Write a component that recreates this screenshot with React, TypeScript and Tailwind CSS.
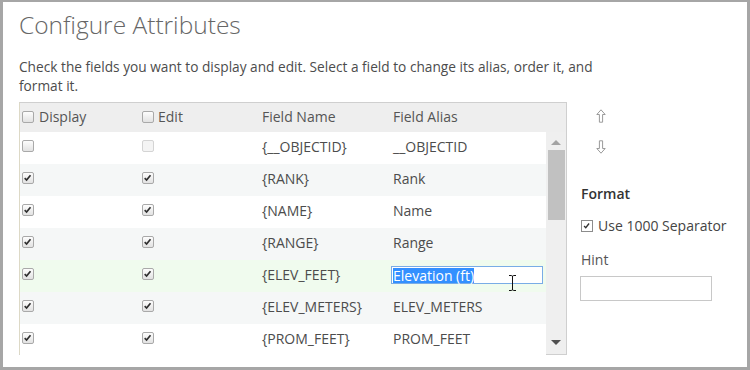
// Configure Attributes panel – field list with display/edit toggles
import React from 'react';

type Row = { name: string; alias: string; display: boolean; edit: boolean; disabled?: boolean };

const rows: Row[] = [
  { name: '{__OBJECTID}', alias: '__OBJECTID', display: false, edit: false, disabled: true },
  { name: '{RANK}', alias: 'Rank', display: true, edit: true },
  { name: '{NAME}', alias: 'Name', display: true, edit: true },
  { name: '{RANGE}', alias: 'Range', display: true, edit: true },
  { name: '{ELEV_FEET}', alias: 'Elevation (ft)', display: true, edit: true },
  { name: '{ELEV_METERS}', alias: 'ELEV_METERS', display: true, edit: true },
  { name: '{PROM_FEET}', alias: 'PROM_FEET', display: true, edit: true },
];

function Box({ checked, disabled }: { checked?: boolean; disabled?: boolean }) {
  return (
    <span
      className={
        'relative inline-block h-[12px] w-[12px] shrink-0 rounded-[2px] border ' +
        (disabled
          ? 'border-[#d4d4d4] bg-[#f4f4f4]'
          : 'border-[#a9a9a9] bg-gradient-to-b from-[#fdfdfd] to-[#e2e2e2]')
      }
    >
      {checked && (
        <svg viewBox="0 0 12 12" className="absolute left-[0px] top-[0px] h-[10px] w-[10px]">
          <path d="M2 6.2 L4.3 8.4 L9 2.6" fill="none" stroke="#2f2f2f" strokeWidth="2" />
        </svg>
      )}
    </span>
  );
}

function Arrow({ down }: { down?: boolean }) {
  return (
    <svg viewBox="0 0 10 14" className={'h-[14px] w-[10px] ' + (down ? 'rotate-180' : '')}>
      <path d="M5 0.8 L9.2 5.5 L6.6 5.5 L6.6 13.2 L3.4 13.2 L3.4 5.5 L0.8 5.5 Z" fill="#fff" stroke="#9a9a9a" strokeWidth="1" />
    </svg>
  );
}

export default function App() {
  return (
    <div
      className="h-[370px] w-[750px] overflow-hidden border-x-[3px] border-b-[3px] border-t-[2px] border-[#a6a6a6] bg-white pl-[16px] text-[#4c4c4c]"
      style={{ fontFamily: '"Open Sans", Lato, sans-serif' }}
    >
      <h1 className="mt-[8px] text-[24.5px] font-light leading-[30px] text-[#666]">Configure Attributes</h1>
      <p className="mt-[17px] text-[13.7px] leading-[19px] text-[#4c4c4c]">
        Check the fields you want to display and edit. Select a field to change its alias, order it, and
        <br />
        format it.
      </p>

      <div className="mt-[7px] flex">
        <div className="flex h-[253px] w-[548px] flex-col border border-l-[#ddd9c6] border-[#cfcfcf]">
          <div className="flex h-[29px] shrink-0 items-center bg-[#eeeeee] pb-[2px] text-[14px] text-[#555]">
            <div className="flex w-[122px] items-center gap-[5px] pl-[2px]">
              <Box /> <span>Display</span>
            </div>
            <div className="flex w-[120px] items-center gap-[4px]">
              <Box /> <span>Edit</span>
            </div>
            <div className="w-[131px]">Field Name</div>
            <div>Field Alias</div>
          </div>
          <div className="flex min-h-0 flex-1">
            <div className="flex-1">
              {rows.map((r, i) => (
                <div
                  key={r.name}
                  className={
                    'flex h-[32px] items-center pb-[4px] text-[14px] text-[#4c4c4c] ' +
                    (i === 4 ? 'bg-[#f0fbee]' : i % 2 === 1 ? 'bg-[#f5f7f7]' : 'bg-white')
                  }
                >
                  <div className="flex w-[122px] pl-[2px]">
                    <Box checked={r.display} />
                  </div>
                  <div className="flex w-[120px]">
                    <Box checked={r.edit} disabled={r.disabled} />
                  </div>
                  <div className="w-[131px]">{r.name}</div>
                  {i === 4 ? (
                    <div className="relative -ml-[2px] mt-[2px] flex h-[18px] w-[152px] items-center border border-[#79ace6] bg-white pl-[1px]">
                      <span className="bg-[#3390ff] leading-[15px] text-white">{r.alias}</span>
                      <svg viewBox="0 0 9 16" className="absolute left-[116px] top-[8px] h-[16px] w-[9px]">
                        <path d="M1 0.5 H3.5 Q4.5 0.5 4.5 2 V14 Q4.5 15.5 3.5 15.5 H1 M8 0.5 H5.5 Q4.5 0.5 4.5 2 M4.5 14 Q4.5 15.5 5.5 15.5 H8" fill="none" stroke="#111" strokeWidth="1" />
                      </svg>
                    </div>
                  ) : (
                    <div>{r.alias}</div>
                  )}
                </div>
              ))}
            </div>
            <div className="flex w-[20px] shrink-0 flex-col items-center bg-[#efefef] pt-[8px]">
              <span className="h-0 w-0 border-x-[5px] border-b-[5px] border-x-transparent border-b-[#a3a3a3]" />
              <div className="mt-[5px] h-[70px] w-[17px] bg-[#c1c1c1]" />
              <div className="flex-1" />
              <span className="mb-[9px] h-0 w-0 border-x-[5px] border-t-[5px] border-x-transparent border-t-[#505050]" />
            </div>
          </div>
        </div>

        <div className="ml-[14px] flex flex-col">
          <div className="ml-[15px] mt-[7px]">
            <Arrow />
          </div>
          <div className="ml-[15px] mt-[17px]">
            <Arrow down />
          </div>
          <div className="mt-[29px] text-[14px] text-[#333]" style={{ fontWeight: 600 }}>Format</div>
          <label className="mt-[11px] flex items-center gap-[5px] text-[14px] text-[#444]">
            <span className="relative inline-block h-[12px] w-[12px] border border-[#8c8c8c] bg-white">
              <svg viewBox="0 0 12 12" className="absolute left-[0px] top-[0px] h-[10px] w-[10px]">
                <path d="M2.5 6 L4.5 8 L8.5 3" fill="none" stroke="#333" strokeWidth="1.6" />
              </svg>
            </span>
            Use 1000 Separator
          </label>
          <div className="mt-[13px] text-[14px] text-[#555]">Hint</div>
          <div className="-ml-[1px] mt-[6px] h-[25px] w-[132px] border border-[#c8c8c8] bg-white" />
        </div>
      </div>
    </div>
  );
}
